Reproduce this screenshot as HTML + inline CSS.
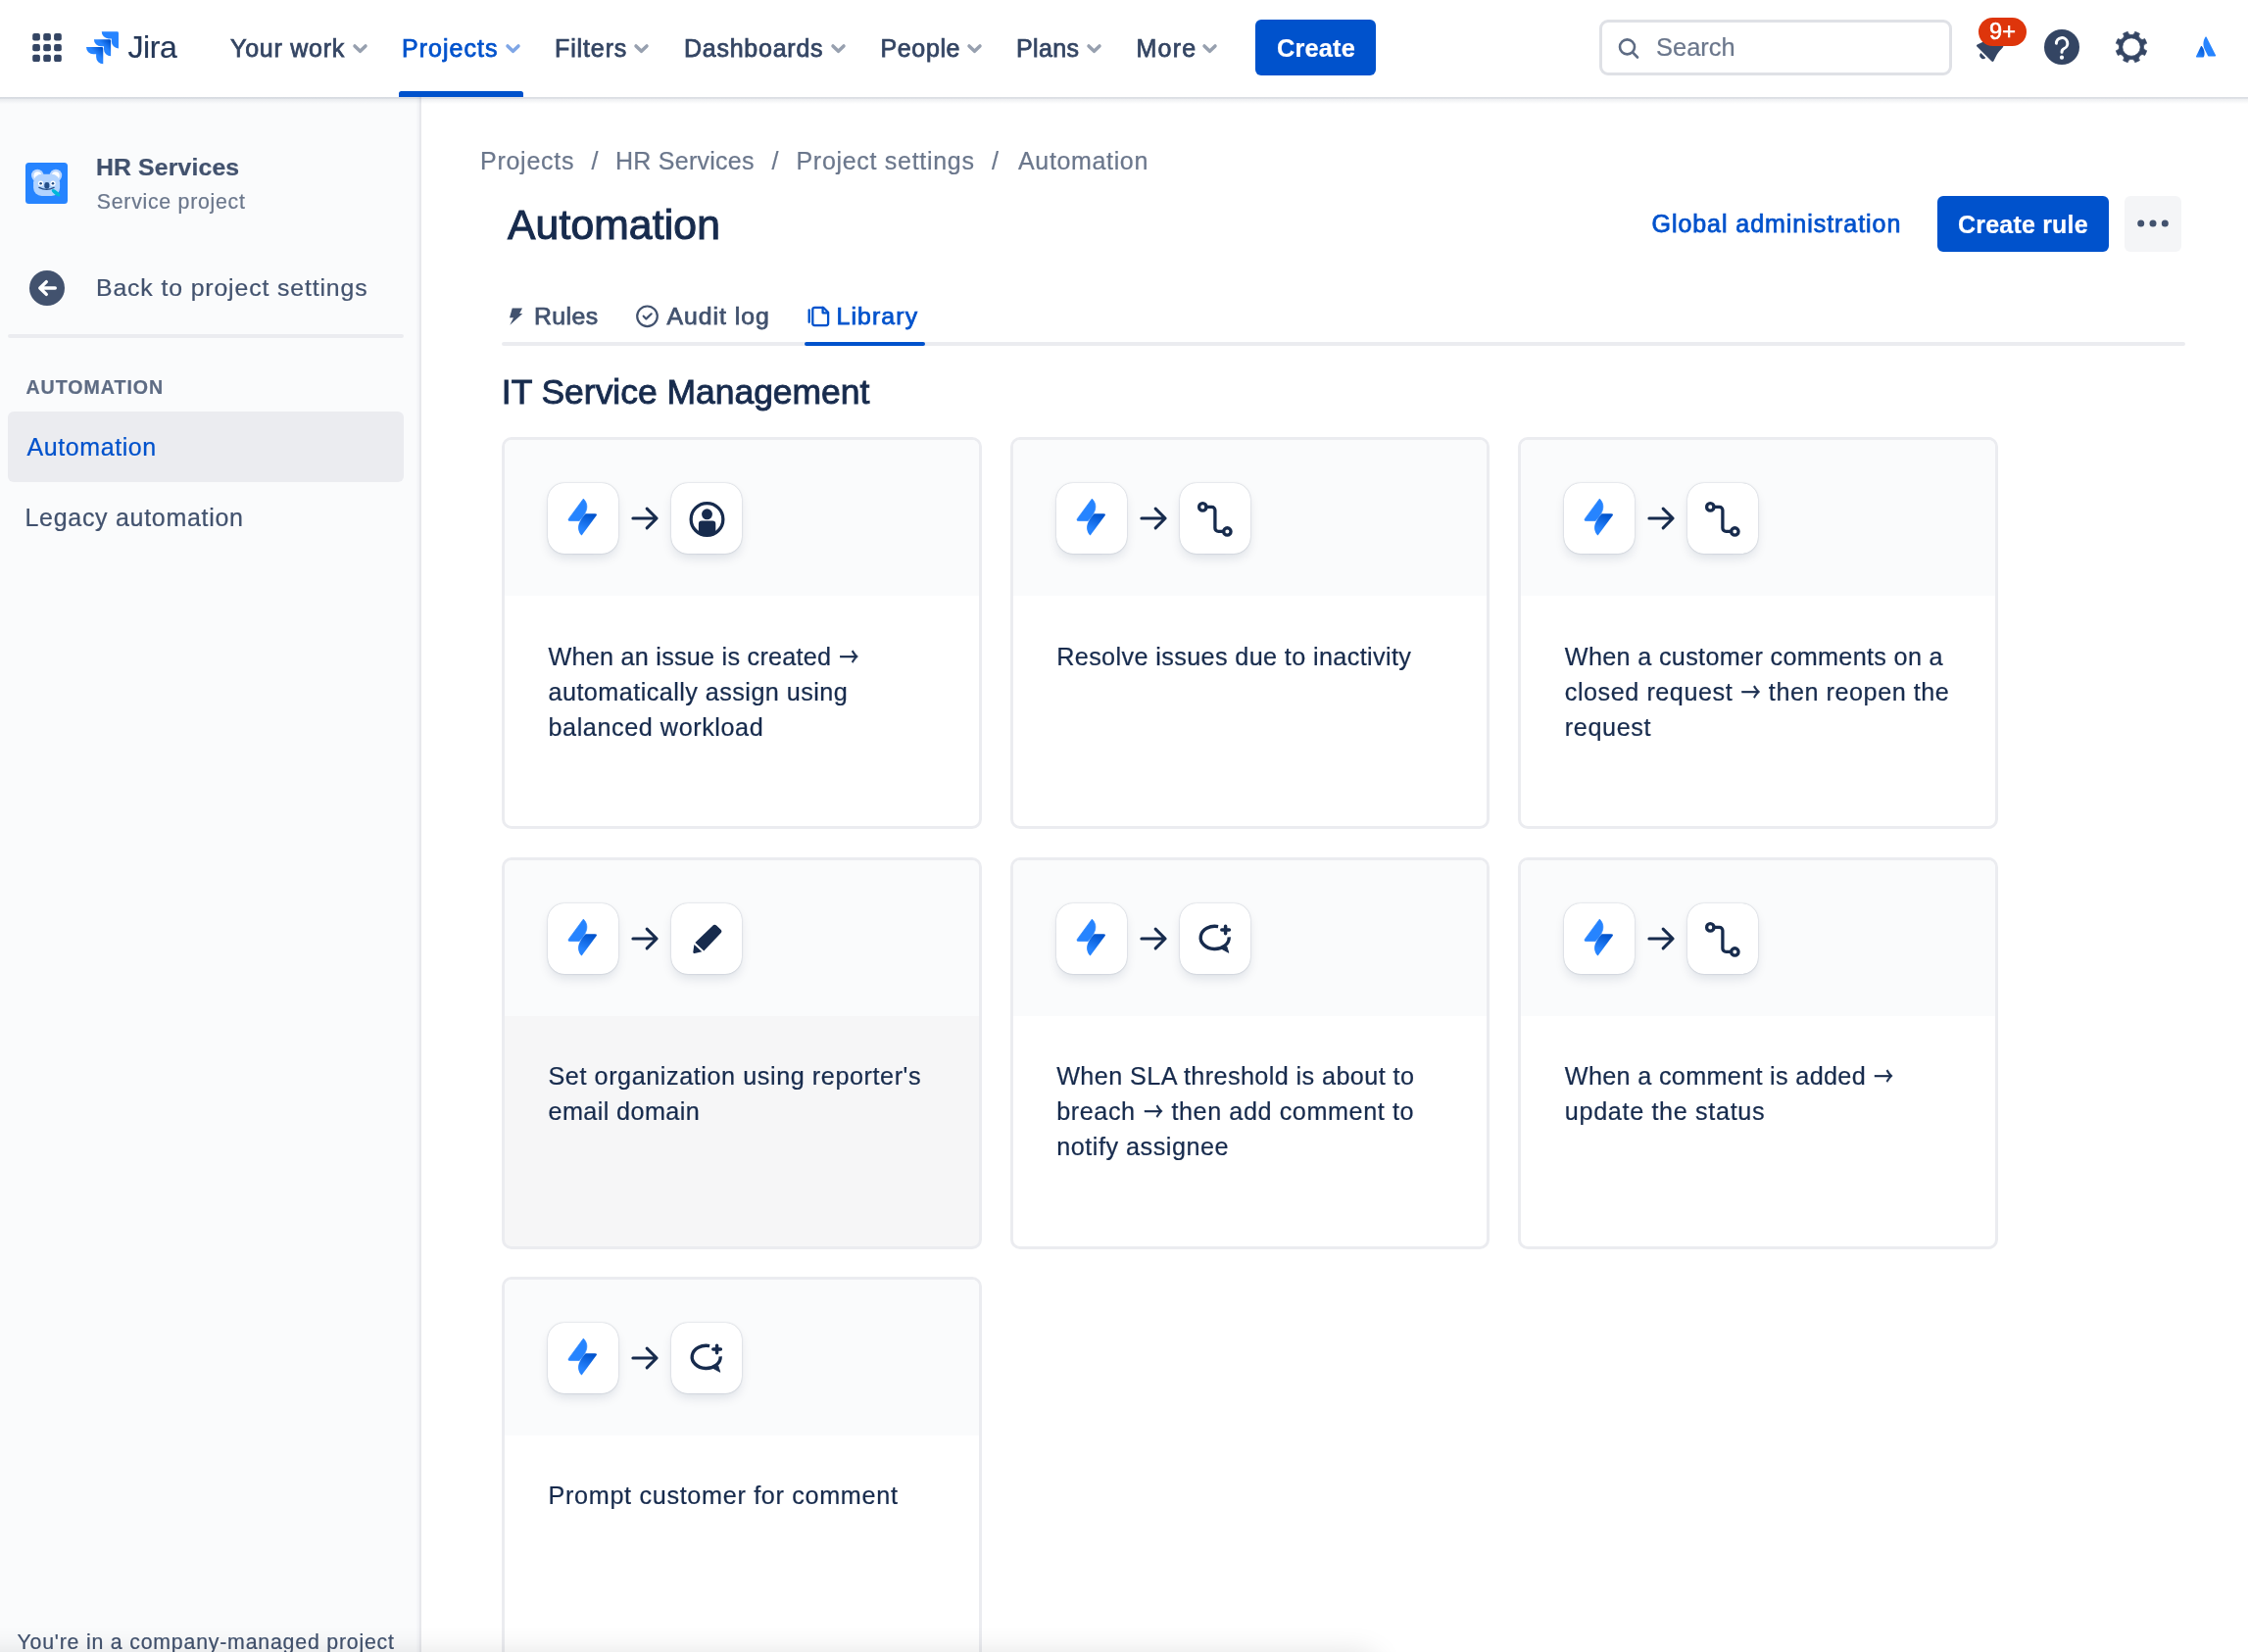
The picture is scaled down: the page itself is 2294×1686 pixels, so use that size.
<!DOCTYPE html>
<html lang="en">
<head>
<meta charset="utf-8">
<title>Automation - HR Services - Jira</title>
<style>
*{box-sizing:border-box;margin:0;padding:0}
html,body{width:2294px;height:1686px;overflow:hidden;background:#fff}
body{position:relative;will-change:transform;font-family:"Liberation Sans",sans-serif;color:#172b4d;-webkit-font-smoothing:antialiased}
.abs{position:absolute}
.t{position:absolute;white-space:nowrap;line-height:1;-webkit-text-stroke:.22px currentColor}
.m{-webkit-text-stroke:.75px currentColor}

/* ---------- top nav ---------- */
#nav{position:absolute;left:0;top:0;width:2294px;height:99px;background:#fff;z-index:5}
#navshadow{position:absolute;left:0;top:99px;width:2294px;height:8px;z-index:5;
 background:linear-gradient(to bottom,rgba(9,30,66,.15) 0,rgba(9,30,66,.13) 1.5px,rgba(9,30,66,.07) 2px,rgba(9,30,66,0) 7px)}
.nv{font-size:25px;color:#344563;top:36.800px}
.nv.act{color:#0052cc}
.chev{position:absolute;top:43.800px;width:17px;height:12px}
#navline{position:absolute;left:407px;top:93px;width:127px;height:6px;background:#0052cc;border-radius:2.5px 2.5px 0 0}
#create{position:absolute;left:1281px;top:20px;width:123px;height:57px;border-radius:6px;background:#0052cc}
#search{position:absolute;left:1632px;top:20px;width:360px;height:57px;border:3px solid #dfe1e6;border-radius:9px;background:#fff}
#badge{position:absolute;left:2019px;top:18px;width:49px;height:29px;border-radius:15px;background:#de350b}

/* ---------- sidebar ---------- */
#side{position:absolute;left:0;top:99px;width:430px;height:1587px;background:#fafbfc;border-right:2px solid #e7e8ec;
 box-shadow:inset -4px 0 3px -2px rgba(9,30,66,.04)}
#sel{position:absolute;left:8px;top:420px;width:404px;height:72px;border-radius:6px;background:#ebecf0}
#sdiv{position:absolute;left:8px;top:341px;width:404px;height:4px;border-radius:2px;background:#ebecf0}

/* ---------- main ---------- */
.bc{font-size:25px;color:#6b778c;top:152px}
#tabline{position:absolute;left:512px;top:349px;width:1718px;height:4px;border-radius:2px;background:#ebecf0}
#tabsel{position:absolute;left:821px;top:349px;width:123px;height:4px;border-radius:2px;background:#0052cc}
.tab{font-size:24.8px;color:#42526e;top:311.200px}
#btn-rule{position:absolute;left:1977px;top:200px;width:175px;height:57px;border-radius:6px;background:#0052cc}
#btn-more{position:absolute;left:2168px;top:200px;width:58px;height:57px;border-radius:6px;background:#f4f5f7}

.card{position:absolute;width:489.7px;height:400px;border:3px solid #ebecf0;border-radius:10px;background:#fff;overflow:hidden}
.card .top{position:absolute;left:0;top:0;width:100%;height:158.5px;background:#fafbfc}
.card.hov{background:#f6f6f7}
.tile{position:absolute;top:43.5px;width:72px;height:72px;border-radius:17px;background:#fff;
 box-shadow:0 0 1.5px rgba(9,30,66,.32),0 6px 12px -2px rgba(9,30,66,.13)}
.tile.a{left:44px}
.tile.b{left:170px}
.tile svg{position:absolute;left:0;top:0;width:72px;height:72px}
.arr{position:absolute;left:128px;top:66.400px;width:32px;height:28px}
.ar{font-family:"Noto Sans CJK SC","DejaVu Sans",sans-serif;font-size:19.600px;letter-spacing:0;display:inline-block;line-height:0;position:relative;top:-1.700px;margin:0 1px 0 1px;-webkit-text-stroke:.45px currentColor;transform:scaleY(1.35)}
.card p{position:absolute;left:44.5px;top:203.8px;font-size:25.2px;line-height:35.9px;color:#172b4d;white-space:nowrap;-webkit-text-stroke:.22px currentColor}
</style>
</head>
<body>

<!-- ======================= TOP NAV ======================= -->
<header id="nav">
  <!-- app switcher -->
  <svg class="abs" style="left:33px;top:34px" width="30" height="29" viewBox="0 0 30 29" aria-label="App switcher">
    <g fill="#344563">
      <rect x="0.2" y="0" width="7.7" height="7.4" rx="2"/><rect x="11.2" y="0" width="7.7" height="7.4" rx="2"/><rect x="22.1" y="0" width="7.7" height="7.4" rx="2"/>
      <rect x="0.2" y="10.9" width="7.7" height="7.4" rx="2"/><rect x="11.2" y="10.9" width="7.7" height="7.4" rx="2"/><rect x="22.1" y="10.9" width="7.7" height="7.4" rx="2"/>
      <rect x="0.2" y="21.7" width="7.7" height="7.4" rx="2"/><rect x="11.2" y="21.7" width="7.7" height="7.4" rx="2"/><rect x="22.1" y="21.7" width="7.7" height="7.4" rx="2"/>
    </g>
  </svg>
  <!-- Jira logo -->
  <svg class="abs" style="left:83px;top:26.7px" width="42.5" height="42.5" viewBox="0 0 32 32" aria-label="Jira">
    <defs>
      <linearGradient id="jg1" x1="98%" y1="0%" x2="58%" y2="41%"><stop offset="18%" stop-color="#0052cc"/><stop offset="100%" stop-color="#2684ff"/></linearGradient>
    </defs>
    <path fill="#2684ff" d="M27.545 4H15.61a5.39 5.39 0 0 0 5.39 5.39h2.198v2.122a5.39 5.39 0 0 0 5.39 5.387V5.043A1.043 1.043 0 0 0 27.545 4z"/>
    <path fill="url(#jg1)" d="M21.638 9.948H9.703a5.39 5.39 0 0 0 5.387 5.387h2.198v2.13a5.39 5.39 0 0 0 5.39 5.38V10.991a1.043 1.043 0 0 0-1.04-1.043z"/>
    <path fill="url(#jg1)" d="M15.729 15.893H3.794a5.39 5.39 0 0 0 5.39 5.39h2.205v2.122a5.39 5.39 0 0 0 5.383 5.387V16.936a1.043 1.043 0 0 0-1.043-1.043z"/>
  </svg>
  <span id="t-jira" class="t" style="left:130.4px;top:32px;font-size:32px;color:#253858;letter-spacing:-0.40px">Jira</span>

  <span id="t-yourwork" class="t nv m" style="left:235px;letter-spacing:0.75px">Your work</span>
  <svg class="chev" style="left:359px" viewBox="0 0 17 12"><path d="M3 2.900 8.500 8.300 14 2.900" fill="none" stroke="#97a0af" stroke-width="3.500" stroke-linecap="round" stroke-linejoin="round"/></svg>
  <span id="t-projects" class="t nv act m" style="left:410px;letter-spacing:1.04px">Projects</span>
  <svg class="chev" style="left:515px" viewBox="0 0 17 12"><path d="M3 2.900 8.500 8.300 14 2.900" fill="none" stroke="#7fa6e6" stroke-width="3.500" stroke-linecap="round" stroke-linejoin="round"/></svg>
  <span id="t-filters" class="t nv m" style="left:566px;letter-spacing:0.88px">Filters</span>
  <svg class="chev" style="left:646px" viewBox="0 0 17 12"><path d="M3 2.900 8.500 8.300 14 2.900" fill="none" stroke="#97a0af" stroke-width="3.500" stroke-linecap="round" stroke-linejoin="round"/></svg>
  <span id="t-dashboards" class="t nv m" style="left:698px;letter-spacing:0.75px">Dashboards</span>
  <svg class="chev" style="left:847px" viewBox="0 0 17 12"><path d="M3 2.900 8.500 8.300 14 2.900" fill="none" stroke="#97a0af" stroke-width="3.500" stroke-linecap="round" stroke-linejoin="round"/></svg>
  <span id="t-people" class="t nv m" style="left:898.6px;letter-spacing:0.60px">People</span>
  <svg class="chev" style="left:985.5px" viewBox="0 0 17 12"><path d="M3 2.900 8.500 8.300 14 2.900" fill="none" stroke="#97a0af" stroke-width="3.500" stroke-linecap="round" stroke-linejoin="round"/></svg>
  <span id="t-plans" class="t nv m" style="left:1037px;letter-spacing:0.36px">Plans</span>
  <svg class="chev" style="left:1108px" viewBox="0 0 17 12"><path d="M3 2.900 8.500 8.300 14 2.900" fill="none" stroke="#97a0af" stroke-width="3.500" stroke-linecap="round" stroke-linejoin="round"/></svg>
  <span id="t-more" class="t nv m" style="left:1159.5px;letter-spacing:1.21px">More</span>
  <svg class="chev" style="left:1226px" viewBox="0 0 17 12"><path d="M3 2.900 8.500 8.300 14 2.900" fill="none" stroke="#97a0af" stroke-width="3.500" stroke-linecap="round" stroke-linejoin="round"/></svg>
  <div id="navline"></div>

  <div id="create"><span id="t-create" class="t" style="left:22px;top:16.5px;font-size:25.4px;font-weight:bold;color:#fff;letter-spacing:0.15px">Create</span></div>

  <div id="search">
    <svg class="abs" style="left:13.500px;top:13.500px" width="26" height="26" viewBox="0 0 26 26"><circle cx="11.500" cy="10.900" r="7.500" fill="none" stroke="#5e6c84" stroke-width="2.600"/><path d="M17 16.400 22 21.500" stroke="#5e6c84" stroke-width="2.600" stroke-linecap="round"/></svg>
    <span id="t-search" class="t" style="left:55px;top:12.600px;font-size:25.4px;color:#6b778c;letter-spacing:0.05px">Search</span>
  </div>

  <!-- notifications -->
  <svg class="abs" style="left:2009.800px;top:28px" width="42" height="42" viewBox="0 0 24 24" aria-label="Notifications">
    <path fill="#344563" d="M6.485 17.669a2 2 0 0 0 2.829 0l-2.829-2.83a2 2 0 0 0 0 2.83zm4.897-12.191l-.725.725c-.782.782-2.21 1.813-3.206 2.311l-3.017 1.509c-.495.248-.584.774-.187 1.171l8.556 8.556c.398.396.922.313 1.171-.188l1.51-3.016c.494-.988 1.526-2.42 2.311-3.206l.725-.726a5.048 5.048 0 0 0 .64-6.356 1.01 1.01 0 1 0-1.354-1.494c-.023.025-.046.049-.066.075a5.043 5.043 0 0 0-2.788-.84 5.036 5.036 0 0 0-3.57 1.478z"/>
  </svg>
  <div id="badge"><span id="t-badge" class="t" style="left:11px;top:3px;font-size:23.500px;font-weight:normal;color:#fff;letter-spacing:.2px;-webkit-text-stroke:.55px #fff">9+</span></div>

  <!-- help -->
  <svg class="abs" style="left:2085.600px;top:30.400px" width="36" height="36" viewBox="0 0 36 36" aria-label="Help">
    <circle cx="18" cy="18" r="18" fill="#344563"/>
    <path d="M12.400 14.300a5.700 5.700 0 1 1 8 5.200c-1.700.9-2.400 1.800-2.400 3.700" fill="none" stroke="#fff" stroke-width="3" stroke-linecap="round"/>
    <circle cx="18" cy="28.700" r="2.100" fill="#fff"/>
  </svg>

  <!-- settings gear -->
  <svg class="abs" style="left:2157px;top:29.800px" width="36" height="36" viewBox="-18 -18 36 36" aria-label="Settings">
    <path id="gear" fill="#344563" stroke="#344563" stroke-width=".8" stroke-linejoin="round" fill-rule="evenodd" d="M3.68 -15.57A16.0 16.0 0 0 1 8.41 -13.61A3.7 3.7 0 0 0 13.61 -8.41A16.0 16.0 0 0 1 15.57 -3.68A3.7 3.7 0 0 0 15.57 3.68A16.0 16.0 0 0 1 13.61 8.41A3.7 3.7 0 0 0 8.41 13.61A16.0 16.0 0 0 1 3.68 15.57A3.7 3.7 0 0 0 -3.68 15.57A16.0 16.0 0 0 1 -8.41 13.61A3.7 3.7 0 0 0 -13.61 8.41A16.0 16.0 0 0 1 -15.57 3.68A3.7 3.7 0 0 0 -15.57 -3.68A16.0 16.0 0 0 1 -13.61 -8.41A3.7 3.7 0 0 0 -8.41 -13.61A16.0 16.0 0 0 1 -3.68 -15.57A3.7 3.7 0 0 0 3.68 -15.57ZM9.25 0A9.25 9.25 0 1 0 -9.25 0A9.25 9.25 0 1 0 9.25 0Z"/>
  </svg>

  <!-- atlassian / profile -->
  <svg class="abs" style="left:2240px;top:37px" width="23" height="22" viewBox="0 0 23 22" aria-label="Profile">
    <defs><linearGradient id="ag" x1="100%" y1="20%" x2="40%" y2="100%"><stop offset="0" stop-color="#0052cc"/><stop offset="1" stop-color="#2684ff"/></linearGradient></defs>
    <path fill="url(#ag)" d="M6.9 10.2c-.3-.4-.8-.3-1 .1L1 20.6c-.2.4.1.9.5.9h6.800c.3 0 .5-.1.600-.4 1.500-3.100.6-7.900-2-10.900z"/>
    <path fill="#2684ff" d="M10.500.8c-2.700 4.300-2.500 9.100-.7 12.700l3.300 6.600c.1.300.4.400.6.400h6.800c.5 0 .8-.500.6-.9L11.600.8c-.2-.5-.8-.5-1.100 0z"/>
  </svg>
</header>
<div id="navshadow"></div>

<!-- ======================= SIDEBAR ======================= -->
<aside id="side">
  <!-- project header -->
  <div class="abs" style="left:26px;top:67px;width:43.200px;height:42.200px;border-radius:3.500px;background:#2684ff;overflow:hidden">
    <svg width="43.200" height="42.200" viewBox="0 0 43.200 42.200">
      <circle cx="12.200" cy="13" r="6.200" fill="#b9d6ff"/><circle cx="31" cy="13" r="6.200" fill="#b9d6ff"/>
      <circle cx="12.400" cy="13.200" r="3.900" fill="#fff"/><circle cx="30.800" cy="13.200" r="3.900" fill="#fff"/>
      <rect x="8.100" y="11.800" width="27" height="22.200" rx="8.500" fill="#b3d4ff"/>
      <circle cx="15.600" cy="21.200" r="2.600" fill="#fff"/><circle cx="28" cy="21.200" r="2.600" fill="#fff"/>
      <circle cx="15.600" cy="21.200" r="1.300" fill="#254f88"/><circle cx="28" cy="21.200" r="1.300" fill="#254f88"/>
      <rect x="19.300" y="20.100" width="5.100" height="6.600" rx="2.400" fill="#254f88"/>
      <path d="M13.900 25.400c4.600 2.400 10.600 2.400 15.200 0" fill="none" stroke="#254f88" stroke-width="1.300" stroke-linecap="round"/>
      <ellipse cx="31.050" cy="30.700" rx="5.200" ry="2" transform="rotate(39 31.050 30.700)" fill="#00b8d9"/>
    </svg>
  </div>
  <span id="t-hrs" class="t" style="left:98px;top:60.2px;font-size:24.8px;font-weight:bold;color:#42526e;letter-spacing:0.14px">HR Services</span>
  <span id="t-svc" class="t" style="left:98.8px;top:97px;font-size:21.3px;color:#6b778c;letter-spacing:0.73px">Service project</span>

  <!-- back -->
  <svg class="abs" style="left:29.7px;top:177.3px" width="36" height="36" viewBox="0 0 36 36" aria-label="Back">
    <circle cx="18" cy="18" r="18" fill="#42526e"/>
    <path d="M26.300 18H11.300M17.300 11.600 10.800 18l6.500 6.400" fill="none" stroke="#fff" stroke-width="3.400" stroke-linecap="round" stroke-linejoin="round"/>
  </svg>
  <span id="t-back" class="t" style="left:98px;top:182.900px;font-size:24.8px;color:#42526e;letter-spacing:0.88px">Back to project settings</span>
  <div id="sdiv" style="top:242px"></div>

  <span id="t-autoh" class="t" style="left:26.500px;top:286.600px;font-size:19.600px;font-weight:bold;color:#5e6c84;letter-spacing:0.97px">AUTOMATION</span>
  <div id="sel" style="top:321px"><span id="t-autos" class="t" style="left:19.500px;top:24.400px;font-size:25px;color:#0052cc;letter-spacing:0.58px">Automation</span></div>
  <span id="t-legacy" class="t" style="left:25.500px;top:417px;font-size:25px;color:#42526e;letter-spacing:0.70px">Legacy automation</span>

  <span id="t-bottom" class="t" style="left:17.500px;top:1566.900px;font-size:21.3px;color:#42526e;letter-spacing:0.80px">You're in a company-managed project</span>
</aside>

<!-- ======================= MAIN ======================= -->
<main id="main">
  <!-- breadcrumbs -->
  <span id="t-bc1" class="t bc" style="left:490.0px;letter-spacing:0.74px">Projects</span>
  <span class="t bc" style="left:603.5px">/</span>
  <span id="t-bc2" class="t bc" style="left:628.0px;letter-spacing:0.25px">HR Services</span>
  <span class="t bc" style="left:787.5px">/</span>
  <span id="t-bc3" class="t bc" style="left:812.5px;letter-spacing:0.70px">Project settings</span>
  <span class="t bc" style="left:1012px">/</span>
  <span id="t-bc4" class="t bc" style="left:1039.0px;letter-spacing:0.65px">Automation</span>

  <h1 id="t-h1" class="t m" style="-webkit-text-stroke:1.1px currentColor;left:518px;top:207.5px;font-size:42.6px;font-weight:normal;color:#172b4d;letter-spacing:0.15px">Automation</h1>

  <span id="t-global" class="t m" style="left:1685.500px;top:216.2px;font-size:25px;color:#0052cc;letter-spacing:0.95px">Global administration</span>
  <div id="btn-rule"><span id="t-rule" class="t" style="left:21.0px;top:17px;font-size:25px;font-weight:bold;color:#fff;letter-spacing:0.20px">Create rule</span></div>
  <div id="btn-more"><svg class="abs" style="left:12px;top:23px" width="34" height="10" viewBox="0 0 34 10"><circle cx="4.700" cy="5" r="3.500" fill="#42526e"/><circle cx="17" cy="5" r="3.500" fill="#42526e"/><circle cx="29.300" cy="5" r="3.500" fill="#42526e"/></svg></div>

  <!-- tabs -->
  <svg class="abs" style="left:518px;top:312px" width="18" height="22" viewBox="0 0 18 22"><path fill="#42526e" d="M4.700 2.400H15L12.100 8.100H15.250L2.300 19.700 5.950 12.350H2z"/></svg>
  <span id="t-rules" class="t tab m" style="left:545px;letter-spacing:0.45px">Rules</span>
  <svg class="abs" style="left:648px;top:311px" width="25" height="25" viewBox="0 0 25 25"><circle cx="12.500" cy="11.800" r="10.300" fill="none" stroke="#42526e" stroke-width="2.200"/><path d="M8.700 11.650 11.400 14.400 16.700 9.300" fill="none" stroke="#42526e" stroke-width="2.200" stroke-linecap="round" stroke-linejoin="round"/></svg>
  <span id="t-audit" class="t tab m" style="left:680.5px;letter-spacing:0.97px">Audit log</span>
  <svg class="abs" style="left:823px;top:311px" width="26" height="24" viewBox="0 0 26 24"><g fill="none" stroke="#0052cc" stroke-width="2.300" stroke-linejoin="round" stroke-linecap="round"><path d="M8.300 2.800h8.800l5 5v11.300a2 2 0 0 1-2 2H8.300a2 2 0 0 1-2-2V4.800a2 2 0 0 1 2-2z"/><path d="M16.600 3v5.300h5.300"/><path d="M2.700 5.500v12.300"/></g></svg>
  <span id="t-library" class="t tab m" style="left:853.500px;color:#0052cc;letter-spacing:1.13px">Library</span>
  <div id="tabline"></div><div id="tabsel"></div>

  <h2 id="t-h2" class="t m" style="-webkit-text-stroke:.9px currentColor;left:511.8px;top:382.500px;font-size:35.5px;font-weight:normal;color:#172b4d;letter-spacing:-0.03px">IT Service Management</h2>

  <article class="card" style="left:512px;top:446px">
    <div class="top">
      <div class="tile a"><svg viewBox="0 0 72 72"><defs><linearGradient id="bg0" x1="60%" y1="0%" x2="35%" y2="75%"><stop offset="0" stop-color="#0052cc"/><stop offset="1" stop-color="#2684ff"/></linearGradient></defs>
<path fill="#2684ff" stroke="#2684ff" stroke-width=".7" stroke-linejoin="round" transform="translate(-.65 -.75)" d="M37 16.850 22 37.200Q20.700 39.300 23.400 39.300H32.900C38.100 33.500 44.600 25 37 16.850z"/>
<path fill="url(#bg0)" transform="translate(-.65 -.75)" d="M35.200 54.350 50.200 34Q51.500 31.900 48.800 31.900H39.300C34.100 37.700 27.600 46.200 35.200 54.350z"/></svg></div>
      <svg class="arr" viewBox="0 0 32 28"><path d="M2.900 14H27M17.150 4.100 27.100 14 17.150 23.900" fill="none" stroke="#172b4d" stroke-width="3.050" stroke-linecap="round" stroke-linejoin="round"/></svg>
      <div class="tile b"><svg viewBox="0 0 72 72"><defs><clipPath id="pc0"><circle cx="36.500" cy="36.900" r="16"/></clipPath></defs><circle cx="36.500" cy="36.900" r="16.350" fill="none" stroke="#172b4d" stroke-width="3.300"/><circle cx="36.500" cy="31.800" r="5.450" fill="#172b4d"/><rect x="27.900" y="38.600" width="17.400" height="18" rx="3.200" fill="#172b4d" clip-path="url(#pc0)"/></svg></div>
    </div>
    <p><span id="t-c1l1" style="display:inline-block;letter-spacing:0.25px">When an issue is created <span class="ar">→</span></span><br><span id="t-c1l2" style="display:inline-block;letter-spacing:0.45px">automatically assign using</span><br><span id="t-c1l3" style="display:inline-block;letter-spacing:0.57px">balanced workload</span></p>
  </article>
  <article class="card" style="left:1030.7px;top:446px">
    <div class="top">
      <div class="tile a"><svg viewBox="0 0 72 72"><defs><linearGradient id="bg1" x1="60%" y1="0%" x2="35%" y2="75%"><stop offset="0" stop-color="#0052cc"/><stop offset="1" stop-color="#2684ff"/></linearGradient></defs>
<path fill="#2684ff" stroke="#2684ff" stroke-width=".7" stroke-linejoin="round" transform="translate(-.65 -.75)" d="M37 16.850 22 37.200Q20.700 39.300 23.400 39.300H32.900C38.100 33.500 44.600 25 37 16.850z"/>
<path fill="url(#bg1)" transform="translate(-.65 -.75)" d="M35.200 54.350 50.200 34Q51.500 31.900 48.800 31.900H39.300C34.100 37.700 27.600 46.200 35.200 54.350z"/></svg></div>
      <svg class="arr" viewBox="0 0 32 28"><path d="M2.900 14H27M17.150 4.100 27.100 14 17.150 23.900" fill="none" stroke="#172b4d" stroke-width="3.050" stroke-linecap="round" stroke-linejoin="round"/></svg>
      <div class="tile b"><svg viewBox="0 0 72 72"><g fill="none" stroke="#172b4d" stroke-width="3.300" stroke-linecap="round" stroke-linejoin="round">
<circle cx="23.300" cy="24.400" r="3.700"/><circle cx="48.350" cy="49.450" r="3.700"/>
<path d="M27 24.400h5.500a3.400 3.400 0 0 1 3.400 3.400v18.250a3.400 3.400 0 0 0 3.400 3.400h5.350"/></g></svg></div>
    </div>
    <p><span id="t-c2l1" style="display:inline-block;letter-spacing:0.38px">Resolve issues due to inactivity</span></p>
  </article>
  <article class="card" style="left:1549.3px;top:446px">
    <div class="top">
      <div class="tile a"><svg viewBox="0 0 72 72"><defs><linearGradient id="bg2" x1="60%" y1="0%" x2="35%" y2="75%"><stop offset="0" stop-color="#0052cc"/><stop offset="1" stop-color="#2684ff"/></linearGradient></defs>
<path fill="#2684ff" stroke="#2684ff" stroke-width=".7" stroke-linejoin="round" transform="translate(-.65 -.75)" d="M37 16.850 22 37.200Q20.700 39.300 23.400 39.300H32.900C38.100 33.500 44.600 25 37 16.850z"/>
<path fill="url(#bg2)" transform="translate(-.65 -.75)" d="M35.200 54.350 50.200 34Q51.500 31.900 48.800 31.900H39.300C34.100 37.700 27.600 46.200 35.200 54.350z"/></svg></div>
      <svg class="arr" viewBox="0 0 32 28"><path d="M2.900 14H27M17.150 4.100 27.100 14 17.150 23.900" fill="none" stroke="#172b4d" stroke-width="3.050" stroke-linecap="round" stroke-linejoin="round"/></svg>
      <div class="tile b"><svg viewBox="0 0 72 72"><g fill="none" stroke="#172b4d" stroke-width="3.300" stroke-linecap="round" stroke-linejoin="round">
<circle cx="23.300" cy="24.400" r="3.700"/><circle cx="48.350" cy="49.450" r="3.700"/>
<path d="M27 24.400h5.500a3.400 3.400 0 0 1 3.400 3.400v18.250a3.400 3.400 0 0 0 3.400 3.400h5.350"/></g></svg></div>
    </div>
    <p><span id="t-c3l1" style="display:inline-block;letter-spacing:0.33px">When a customer comments on a</span><br><span id="t-c3l2" style="display:inline-block;letter-spacing:0.54px">closed request <span class="ar">→</span> then reopen the</span><br><span id="t-c3l3" style="display:inline-block;letter-spacing:0.61px">request</span></p>
  </article>
  <article class="card hov" style="left:512px;top:875px">
    <div class="top">
      <div class="tile a"><svg viewBox="0 0 72 72"><defs><linearGradient id="bg3" x1="60%" y1="0%" x2="35%" y2="75%"><stop offset="0" stop-color="#0052cc"/><stop offset="1" stop-color="#2684ff"/></linearGradient></defs>
<path fill="#2684ff" stroke="#2684ff" stroke-width=".7" stroke-linejoin="round" transform="translate(-.65 -.75)" d="M37 16.850 22 37.200Q20.700 39.300 23.400 39.300H32.900C38.100 33.500 44.600 25 37 16.850z"/>
<path fill="url(#bg3)" transform="translate(-.65 -.75)" d="M35.200 54.350 50.200 34Q51.500 31.900 48.800 31.900H39.300C34.100 37.700 27.600 46.200 35.200 54.350z"/></svg></div>
      <svg class="arr" viewBox="0 0 32 28"><path d="M2.900 14H27M17.150 4.100 27.100 14 17.150 23.900" fill="none" stroke="#172b4d" stroke-width="3.050" stroke-linecap="round" stroke-linejoin="round"/></svg>
      <div class="tile b"><svg viewBox="0 0 72 72"><g fill="#172b4d">
<path d="M24.400 40 42.050 22.890Q44.200 20.800 46.400 22.840L50.300 26.460Q52.500 28.500 50.350 30.590L33.300 48.500z"/>
<path d="M23.400 41.900 31.300 49.300 23.900 50.900Q22 51.300 22.300 49.500z"/></g></svg></div>
    </div>
    <p style="top:203px"><span id="t-c4l1" style="display:inline-block;letter-spacing:0.57px">Set organization using reporter's</span><br><span id="t-c4l2" style="display:inline-block;letter-spacing:0.40px">email domain</span></p>
  </article>
  <article class="card" style="left:1030.7px;top:875px">
    <div class="top">
      <div class="tile a"><svg viewBox="0 0 72 72"><defs><linearGradient id="bg4" x1="60%" y1="0%" x2="35%" y2="75%"><stop offset="0" stop-color="#0052cc"/><stop offset="1" stop-color="#2684ff"/></linearGradient></defs>
<path fill="#2684ff" stroke="#2684ff" stroke-width=".7" stroke-linejoin="round" transform="translate(-.65 -.75)" d="M37 16.850 22 37.200Q20.700 39.300 23.400 39.300H32.900C38.100 33.500 44.600 25 37 16.850z"/>
<path fill="url(#bg4)" transform="translate(-.65 -.75)" d="M35.200 54.350 50.200 34Q51.500 31.900 48.800 31.900H39.300C34.100 37.700 27.600 46.200 35.200 54.350z"/></svg></div>
      <svg class="arr" viewBox="0 0 32 28"><path d="M2.900 14H27M17.150 4.100 27.100 14 17.150 23.900" fill="none" stroke="#172b4d" stroke-width="3.050" stroke-linecap="round" stroke-linejoin="round"/></svg>
      <div class="tile b"><svg viewBox="0 0 72 72"><g fill="none" stroke="#172b4d">
<path d="M39.100 23.570A14.500 11.650 0 1 0 50.190 34.400" stroke-width="3.400"/>
<path d="M42.800 27H50.400M46.600 23.200V30.800" stroke-width="3.500" stroke-linecap="round"/></g>
<path d="M42.800 46.400 49.800 50.300 47.800 44z" fill="#172b4d" stroke="#172b4d" stroke-width=".9" stroke-linejoin="round"/></svg></div>
    </div>
    <p style="top:203px"><span id="t-c5l1" style="display:inline-block;letter-spacing:0.41px">When SLA threshold is about to</span><br><span id="t-c5l2" style="display:inline-block;letter-spacing:0.58px">breach <span class="ar">→</span> then add comment to</span><br><span id="t-c5l3" style="display:inline-block;letter-spacing:0.52px">notify assignee</span></p>
  </article>
  <article class="card" style="left:1549.3px;top:875px">
    <div class="top">
      <div class="tile a"><svg viewBox="0 0 72 72"><defs><linearGradient id="bg5" x1="60%" y1="0%" x2="35%" y2="75%"><stop offset="0" stop-color="#0052cc"/><stop offset="1" stop-color="#2684ff"/></linearGradient></defs>
<path fill="#2684ff" stroke="#2684ff" stroke-width=".7" stroke-linejoin="round" transform="translate(-.65 -.75)" d="M37 16.850 22 37.200Q20.700 39.300 23.400 39.300H32.900C38.100 33.500 44.600 25 37 16.850z"/>
<path fill="url(#bg5)" transform="translate(-.65 -.75)" d="M35.200 54.350 50.200 34Q51.500 31.900 48.800 31.900H39.300C34.100 37.700 27.600 46.200 35.200 54.350z"/></svg></div>
      <svg class="arr" viewBox="0 0 32 28"><path d="M2.900 14H27M17.150 4.100 27.100 14 17.150 23.900" fill="none" stroke="#172b4d" stroke-width="3.050" stroke-linecap="round" stroke-linejoin="round"/></svg>
      <div class="tile b"><svg viewBox="0 0 72 72"><g fill="none" stroke="#172b4d" stroke-width="3.300" stroke-linecap="round" stroke-linejoin="round">
<circle cx="23.300" cy="24.400" r="3.700"/><circle cx="48.350" cy="49.450" r="3.700"/>
<path d="M27 24.400h5.500a3.400 3.400 0 0 1 3.400 3.400v18.250a3.400 3.400 0 0 0 3.400 3.400h5.350"/></g></svg></div>
    </div>
    <p style="top:203px"><span id="t-c6l1" style="display:inline-block;letter-spacing:0.33px">When a comment is added <span class="ar">→</span></span><br><span id="t-c6l2" style="display:inline-block;letter-spacing:0.66px">update the status</span></p>
  </article>
  <article class="card" style="left:512px;top:1303px">
    <div class="top">
      <div class="tile a"><svg viewBox="0 0 72 72"><defs><linearGradient id="bg6" x1="60%" y1="0%" x2="35%" y2="75%"><stop offset="0" stop-color="#0052cc"/><stop offset="1" stop-color="#2684ff"/></linearGradient></defs>
<path fill="#2684ff" stroke="#2684ff" stroke-width=".7" stroke-linejoin="round" transform="translate(-.65 -.75)" d="M37 16.850 22 37.200Q20.700 39.300 23.400 39.300H32.900C38.100 33.500 44.600 25 37 16.850z"/>
<path fill="url(#bg6)" transform="translate(-.65 -.75)" d="M35.200 54.350 50.200 34Q51.500 31.900 48.800 31.900H39.300C34.100 37.700 27.600 46.200 35.200 54.350z"/></svg></div>
      <svg class="arr" viewBox="0 0 32 28"><path d="M2.900 14H27M17.150 4.100 27.100 14 17.150 23.900" fill="none" stroke="#172b4d" stroke-width="3.050" stroke-linecap="round" stroke-linejoin="round"/></svg>
      <div class="tile b"><svg viewBox="0 0 72 72"><g fill="none" stroke="#172b4d">
<path d="M39.100 23.570A14.500 11.650 0 1 0 50.190 34.400" stroke-width="3.400"/>
<path d="M42.800 27H50.400M46.600 23.200V30.800" stroke-width="3.500" stroke-linecap="round"/></g>
<path d="M42.800 46.400 49.800 50.300 47.800 44z" fill="#172b4d" stroke="#172b4d" stroke-width=".9" stroke-linejoin="round"/></svg></div>
    </div>
    <p style="top:203.2px"><span id="t-c7l1" style="display:inline-block;letter-spacing:0.68px">Prompt customer for comment</span></p>
  </article>
</main>
<div class="abs" style="left:-60px;top:1692px;width:1462px;height:60px;border-radius:14px;box-shadow:0 0 30px 4px rgba(0,0,0,.13);z-index:9"></div>


</body>
</html>
